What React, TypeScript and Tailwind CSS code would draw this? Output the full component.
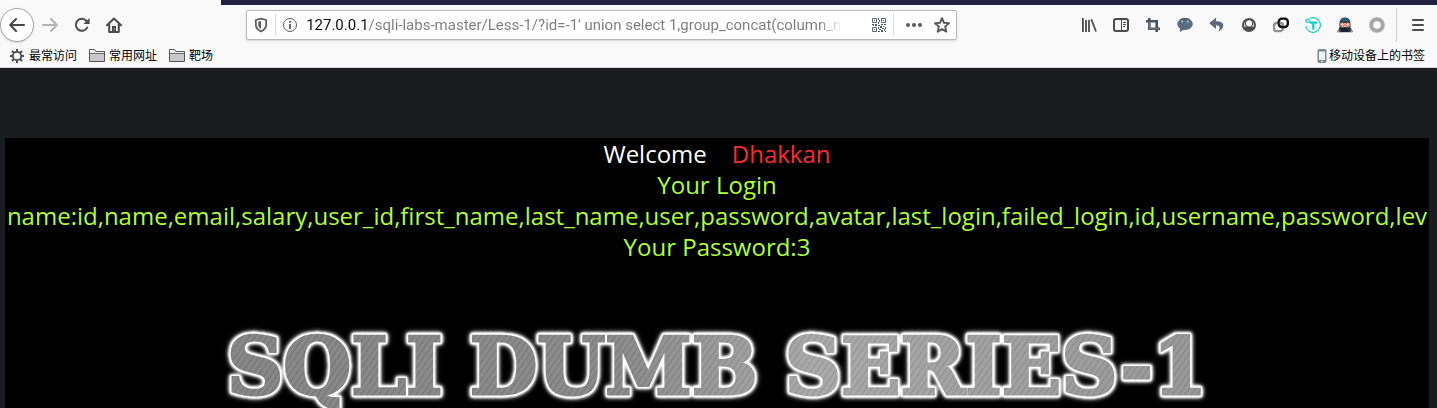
import type { ReactNode } from "react";

function Icon({ children, size = 16 }: { children: ReactNode; size?: number }) {
  return (
    <svg width={size} height={size} viewBox="0 0 16 16" fill="none" aria-hidden="true" className="shrink-0">
      {children}
    </svg>
  );
}

function ToolButton({ label, children }: { label: string; children: ReactNode }) {
  return (
    <button type="button" aria-label={label} className="flex h-8 w-8 shrink-0 items-center justify-center text-[#4c4c4e]">
      {children}
    </button>
  );
}

const stroke = { stroke: "currentColor", strokeWidth: 2, strokeLinecap: "round", strokeLinejoin: "round" } as const;

const BackIcon = () => (
  <Icon>
    <path {...stroke} d="M15 8H1.5M7 2 1.2 8 7 14" />
  </Icon>
);

const ForwardIcon = () => (
  <Icon>
    <path {...stroke} d="M1 8h13.5M9 2l5.8 6L9 14" />
  </Icon>
);

const ReloadIcon = () => (
  <Icon>
    <path {...stroke} d="M13.2 10.6A6 6 0 1 1 12.8 4.4" />
    <path fill="currentColor" d="M15.6 1v5.4a.6.6 0 0 1-.6.6H9.500z" />
  </Icon>
);

const HomeIcon = () => (
  <Icon>
    <path {...stroke} d="M1 8.300 8 1.500l7 6.800M3.200 7.500V15h9.600V7.500" />
    <path fill="currentColor" d="M6 9h4v6H6z" />
    <path fill="#f9f9fa" d="M7.600 11.500h1v1h-1z" />
  </Icon>
);

const ShieldIcon = () => (
  <Icon>
    <path stroke="currentColor" strokeWidth="1.800" strokeLinejoin="round" d="M8 1.600 13.200 3v4.300c0 3.500-2.100 5.900-5.200 7.200-3.100-1.300-5.200-3.700-5.200-7.200V3z" />
    <path fill="currentColor" d="M8 4v8c-1.900-1.100-2.800-2.700-2.800-4.700V4.800z" />
  </Icon>
);

const InfoIcon = () => (
  <Icon>
    <circle cx="8" cy="8" r="6.500" stroke="currentColor" />
    <circle cx="8" cy="4.800" r="1.100" fill="currentColor" />
    <path d="M8 7v5" stroke="currentColor" strokeWidth="1.800" />
  </Icon>
);

const QrIcon = () => (
  <Icon>
    <g stroke="#5b6b78" strokeWidth="1">
      <path d="M1.500 1.500h4v4h-4zM10.500 1.500h4v4h-4zM1.500 10.500h4v4h-4z" />
    </g>
    <path
      fill="#4c5b68"
      d="M3 3h1v1H3zM12 3h1v1h-1zM3 12h1v1H3zM7 1h1v2H7zM8 3h1v2H8zM7 5h1v2H7zM1 7h2v1H1zM4 7h2v2H4zM2 8h1v1H2zM7 8h2v1H7zM10 7h2v1h-2zM13 7h2v1h-2zM9 9h2v2H9zM12 9h1v1h-1zM7 10h1v2H7zM11 11h2v1h-2zM14 10h1v2h-1zM8 12h2v1H8zM7 14h2v1H7zM10 13h2v2h-2zM13 12h1v2h-1zM14 14h1v1h-1z"
    />
  </Icon>
);

const DotsIcon = () => (
  <Icon>
    <g fill="currentColor">
      <circle cx="2" cy="8" r="2" />
      <circle cx="8" cy="8" r="2" />
      <circle cx="14" cy="8" r="2" />
    </g>
  </Icon>
);

const StarIcon = () => (
  <Icon>
    <path {...stroke} d="m8 1.200 2 4.600 5 .5-3.800 3.300 1.100 5L8 12.100l-4.300 2.500 1.100-5L1 6.300l5-.5z" />
  </Icon>
);

const LibraryIcon = () => (
  <Icon>
    <path stroke="currentColor" strokeWidth="1.800" d="M1.900 1v14M5 3v12M8 3v12M10.300 2.200 15 14.500" />
  </Icon>
);

const SidebarIcon = () => (
  <Icon>
    <rect x="1" y="2" width="14" height="12" rx="2" stroke="currentColor" strokeWidth="2" />
    <path stroke="currentColor" d="M8.500 2v12M10 5.500h3M10 7.500h3M10 9.500h2" />
  </Icon>
);

const CropIcon = () => (
  <Icon>
    <path stroke="#455463" strokeWidth="2.600" d="M1 4.300h10.700V15M4.300 1v10.700H15" />
    <path stroke="#718394" strokeWidth="1" d="M4.300 5v6.700H14" />
  </Icon>
);

const ChatIcon = () => (
  <Icon>
    <ellipse cx="8" cy="7" rx="7.800" ry="6" fill="#5b6e80" />
    <path fill="#5b6e80" d="m3 11-.2 4L8 12z" />
    <circle cx="5.200" cy="4.500" r="1" fill="#b9c4ce" />
    <circle cx="10.800" cy="4.500" r="1" fill="#b9c4ce" />
    <path d="M3.500 2.600c2-1.300 7-1.300 9 0" stroke="#3c4c5a" />
  </Icon>
);

const UndoIcon = () => (
  <Icon>
    <path fill="#5a6c7d" d="M7 1 .8 6.200 7 11.500V8.300c3.300 0 4.800 1.500 2.300 6.500 7-4.300 7-10.500-2.300-10.500z" />
    <path stroke="#465666" strokeWidth=".8" d="M7 1 .8 6.200 7 11.500" />
  </Icon>
);

const AccountIcon = () => (
  <Icon>
    <circle cx="8" cy="8" r="7" fill="currentColor" />
    <path fill="#f9f9fa" d="M3.300 9.700a5 5 0 1 1 9.400 0z" />
    <circle cx="8" cy="6.400" r="3.700" fill="#f9f9fa" stroke="currentColor" strokeWidth="1.200" />
  </Icon>
);

const LinkedIcon = () => (
  <Icon>
    <rect x="1" y="5.800" width="9" height="8.400" rx="3" stroke="#929292" strokeWidth="2.200" />
    <rect x="5.800" y="1.600" width="9" height="8.400" rx="3" stroke="#111111" strokeWidth="2.400" />
    <path d="M6.500 5.800H7a3 3 0 0 1 3 3" stroke="#929292" strokeWidth="2" />
  </Icon>
);

const TranslateIcon = () => (
  <Icon>
    <path d="M5 1.400A7.300 7.300 0 1 1 .8 9" stroke="#14cfc0" strokeWidth="1.200" />
    <circle cx="2.600" cy="3.800" r="1.700" stroke="#14cfc0" strokeWidth="1.200" />
    <path d="M4.500 5.700h7.500M8.300 5.700V12.500" stroke="#14cfc0" strokeWidth="2.300" />
  </Icon>
);

const AgentIcon = () => (
  <Icon>
    <path fill="#263f50" d="M2.600 10C1.800 3.500 4 .6 8 .6s6.200 2.900 5.400 9.400l2.400 5.200H.2z" />
    <path fill="#2d6076" d="M4 3.500C5.500.5 10.500.5 12 3.500l-1.500 1h-5z" />
    <path fill="#eab6a0" d="M3 6h10l-.5 3.500L8 12 3.500 9.500z" />
    <circle cx="5.300" cy="7.500" r="1.800" stroke="#cf4f48" fill="#ffe9df" />
    <circle cx="10.700" cy="7.500" r="1.800" stroke="#cf4f48" fill="#ffe9df" />
    <path fill="#17232f" d="m3.500 11 4.500-1 4.500 1L11 15H5z" />
    <path fill="#dc8078" d="m1.200 12 1.500 3H0zM14.800 12l-1.500 3H16z" />
  </Icon>
);

const RingIcon = () => (
  <Icon>
    <circle cx="8" cy="8" r="5.800" stroke="#a8a8a8" strokeWidth="4" />
  </Icon>
);

const MenuIcon = () => (
  <Icon>
    <path {...stroke} d="M3 3h10M3 8h10M3 13h10" />
  </Icon>
);

const GearIcon = () => (
  <Icon>
    <circle cx="8" cy="8" r="4.200" stroke="#4a4a4c" strokeWidth="1.800" />
    <path
      stroke="#4a4a4c"
      strokeWidth="2"
      d="M8 1v2.500M8 12.500V15M1 8h2.500M12.500 8H15M3 3l1.800 1.800M11.200 11.200 13 13M13 3l-1.800 1.800M4.800 11.200 3 13"
    />
  </Icon>
);

const FolderIcon = () => (
  <Icon>
    <path d="M.5 13.500v-12h5l1.500 2h8.500v10z" fill="#c9c9cb" stroke="#555557" strokeLinejoin="round" />
    <path d="M1 2h4.300l1.400 2H15v1.500H1z" fill="#f2f2f3" />
    <path d="M1 5.500h14" stroke="#6b6b6d" />
  </Icon>
);

const PhoneIcon = () => (
  <svg width="10" height="16" viewBox="0 0 10 16" fill="none" aria-hidden="true" className="shrink-0">
    <rect x="1" y="1.500" width="8" height="13" rx="1" fill="#7c8790" stroke="#7c8790" />
    <path fill="#eef2f4" d="M2 3.500h6v8.500H2zM4 13h2v1H4z" />
  </svg>
);

const extensions = [
  { label: "Library", icon: <LibraryIcon /> },
  { label: "Sidebars", icon: <SidebarIcon /> },
  { label: "Crop", icon: <CropIcon /> },
  { label: "Chat", icon: <ChatIcon /> },
  { label: "Undo", icon: <UndoIcon /> },
  { label: "Account", icon: <AccountIcon /> },
  { label: "Proxy", icon: <LinkedIcon /> },
  { label: "Translate", icon: <TranslateIcon /> },
  { label: "User agent", icon: <AgentIcon /> },
  { label: "Status", icon: <RingIcon /> },
];

const bookmarks = [
  { label: "最常访问", icon: <GearIcon /> },
  { label: "常用网址", icon: <FolderIcon /> },
  { label: "靶场", icon: <FolderIcon /> },
];

function AddressBar() {
  return (
    <div className="flex h-[30px] min-w-0 flex-[6] items-center rounded-xs border border-[#b8b8ba] bg-white px-1.5 text-[#5c5c5e] shadow-sm">
      <button type="button" aria-label="Tracking protection" className="flex w-4 justify-center">
        <ShieldIcon />
      </button>
      <span className="ml-1.5 h-[22px] w-px bg-[#dcdcde]" />
      <button type="button" aria-label="Site information" className="ml-1.5 flex w-4 justify-center">
        <InfoIcon />
      </button>
      <input
        type="text"
        aria-label="Address"
        defaultValue="127.0.0.1/sqli-labs-master/Less-1/?id=-1' union select 1,group_concat(column_na"
        className="ml-2 h-6 min-w-0 flex-1 bg-[linear-gradient(to_right,#0c0c0d_60px,#7c7c7e_60px)] bg-clip-text font-['Roboto',sans-serif] text-[15px] text-transparent outline-none [mask-image:linear-gradient(to_right,black_calc(100%-24px),transparent)]"
      />
      <button type="button" aria-label="QR code" className="ml-7 flex w-4 justify-center">
        <QrIcon />
      </button>
      <span className="ml-1.5 h-[22px] w-px bg-[#dcdcde]" />
      <button type="button" aria-label="Page actions" className="ml-3 flex w-4 justify-center">
        <DotsIcon />
      </button>
      <button type="button" aria-label="Bookmark this page" className="ml-3 flex w-4 justify-center">
        <StarIcon />
      </button>
    </div>
  );
}

export default function App() {
  return (
    <div className="flex min-h-screen flex-col overflow-hidden bg-[#1a1b1c] font-['Open_Sans','Noto_Sans_CJK_SC',sans-serif]">
      <header className="border-b border-[#d6d6d8] bg-[#f9f9fa]">
        <div className="flex h-[5px]">
          <div className="w-[221px]" />
          <div className="flex-1 bg-[#202141]" />
        </div>
        <nav aria-label="Navigation" className="flex h-10 items-center">
          <button
            type="button"
            aria-label="Back"
            className="flex h-[34px] w-[34px] shrink-0 items-center justify-center rounded-full border border-[#a9a9ab] bg-white text-[#48484a] shadow-sm"
          >
            <BackIcon />
          </button>
          <button type="button" aria-label="Forward" className="flex h-8 w-8 shrink-0 items-center justify-center text-[#b4b4b6]">
            <ForwardIcon />
          </button>
          <ToolButton label="Reload">
            <ReloadIcon />
          </ToolButton>
          <ToolButton label="Home">
            <HomeIcon />
          </ToolButton>
          <div className="flex-1" />
          <AddressBar />
          <div className="flex-1" />
          {extensions.map((item) => (
            <ToolButton key={item.label} label={item.label}>
              {item.icon}
            </ToolButton>
          ))}
          <span className="ml-[3px] h-[34px] w-px bg-[#d2d2d4]" />
          <div className="ml-[5px] mr-[3px] flex">
            <ToolButton label="Menu">
              <MenuIcon />
            </ToolButton>
          </div>
        </nav>
        <nav aria-label="Bookmarks" className="flex h-[22px] items-center gap-3 pr-3 pl-[9px] text-xs text-black">
          {bookmarks.map((item) => (
            <a key={item.label} href="#" className="flex items-center gap-1 whitespace-nowrap">
              {item.icon}
              {item.label}
            </a>
          ))}
          <a href="#" className="ml-auto flex items-center gap-0.5 whitespace-nowrap">
            <PhoneIcon />
            移动设备上的书签
          </a>
        </nav>
      </header>
      <main className="mt-[70px] mr-2 ml-[5px] flex-1 bg-black text-center text-2xl leading-[31px] text-[#adff2f]">
        <p>
          <span className="text-white">Welcome</span>
          &nbsp;&nbsp;&nbsp;&nbsp;
          <span className="text-[#ff2a2a]">Dhakkan</span>
        </p>
        <p>
          Your Login
          name:id,name,email,salary,user_id,first_name,last_name,user,password,avatar,last_login,failed_login,id,username,password,lev
        </p>
        <p>Your Password:3</p>
        <h1 className="mt-[58px] [filter:drop-shadow(1px_0_0_white)_drop-shadow(-1px_0_0_white)_drop-shadow(0_1px_0_white)_drop-shadow(0_-1px_0_white)_drop-shadow(0_0_1px_white)_drop-shadow(0_0_1px_white)_drop-shadow(0_0_2px_white)]">
          <span className="bg-[repeating-linear-gradient(125deg,rgba(255,255,255,0.08)_0px,rgba(0,0,0,0.06)_2px,rgba(255,255,255,0.04)_3px,rgba(255,255,255,0.08)_5px),linear-gradient(to_right,#808080,#858585_40%,#a5a5a5_60%,#929292)] bg-clip-text font-['DejaVu_Serif',serif] text-[78px] leading-[94px] font-bold whitespace-nowrap text-transparent [-webkit-text-stroke:3px_transparent]">
            SQLI DUMB SERIES-1
          </span>
        </h1>
      </main>
    </div>
  );
}
